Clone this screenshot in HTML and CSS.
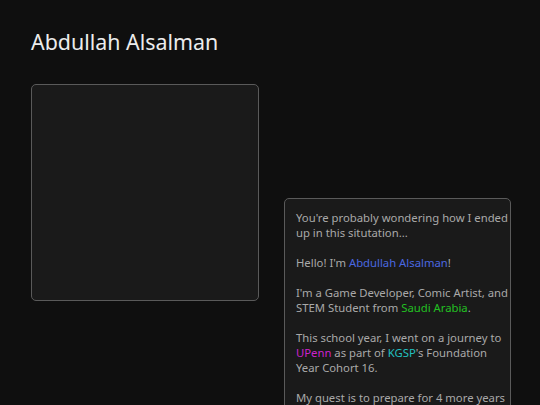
FILE: index.html
```html
<!DOCTYPE html>
<html>
<head>
<meta charset="utf-8">
<link rel="stylesheet" href="styles.css">
</head>
<body>
<div class="page">
  <h1 class="title">Abdullah Alsalman</h1>
  <div class="row">
    <div class="frame"></div>
    <div class="card">
      <p>You're probably wondering how I ended<br>up in this situtation...</p>
      <p>Hello! I'm <span class="blue">Abdullah Alsalman</span>!</p>
      <p>I'm a Game Developer, Comic Artist, and<br>STEM Student from <span class="green">Saudi Arabia</span>.</p>
      <p>This school year, I went on a journey to<br><span class="magenta">UPenn</span> as part of <span class="cyan">KGSP</span>'s Foundation<br>Year Cohort 16.</p>
      <p>My quest is to prepare for 4 more years<br>of study abroad.</p>
    </div>
  </div>
</div>
</body>
</html>
```
FILE: styles.css
```css
html, body {
  margin: 0;
  padding: 0;
  background: #0f0f0f;
  height: 100%;
  overflow: hidden;
}
.page {
  padding: 27px 31px 0 31px;
  font-family: "Noto Sans", "Open Sans", sans-serif;
}
.title {
  margin: 0;
  font-size: 21.4px;
  font-weight: 400;
  color: #ececec;
  line-height: 30px;
}
.row {
  display: flex;
  align-items: flex-start;
  gap: 25px;
  margin-top: 27px;
}
.frame {
  width: 226px;
  height: 215px;
  border: 1px solid #5a5a5a;
  border-radius: 5px;
  background: #1a1a1a;
  flex: none;
}
.card {
  width: 214px;
  margin-top: 114px;
  padding: 11px 0 10px 11px;
  border: 1px solid #5a5a5a;
  border-radius: 5px;
  background: #1a1a1a;
  color: #a9a9a9;
  font-size: 11.3px;
  line-height: 15px;
  white-space: nowrap;
  flex: none;
}
.card p {
  margin: 0 0 15px 0;
}
.blue { color: #4a68e0; }
.green { color: #22c022; }
.magenta { color: #cc22cc; }
.cyan { color: #22c0c0; }
```
